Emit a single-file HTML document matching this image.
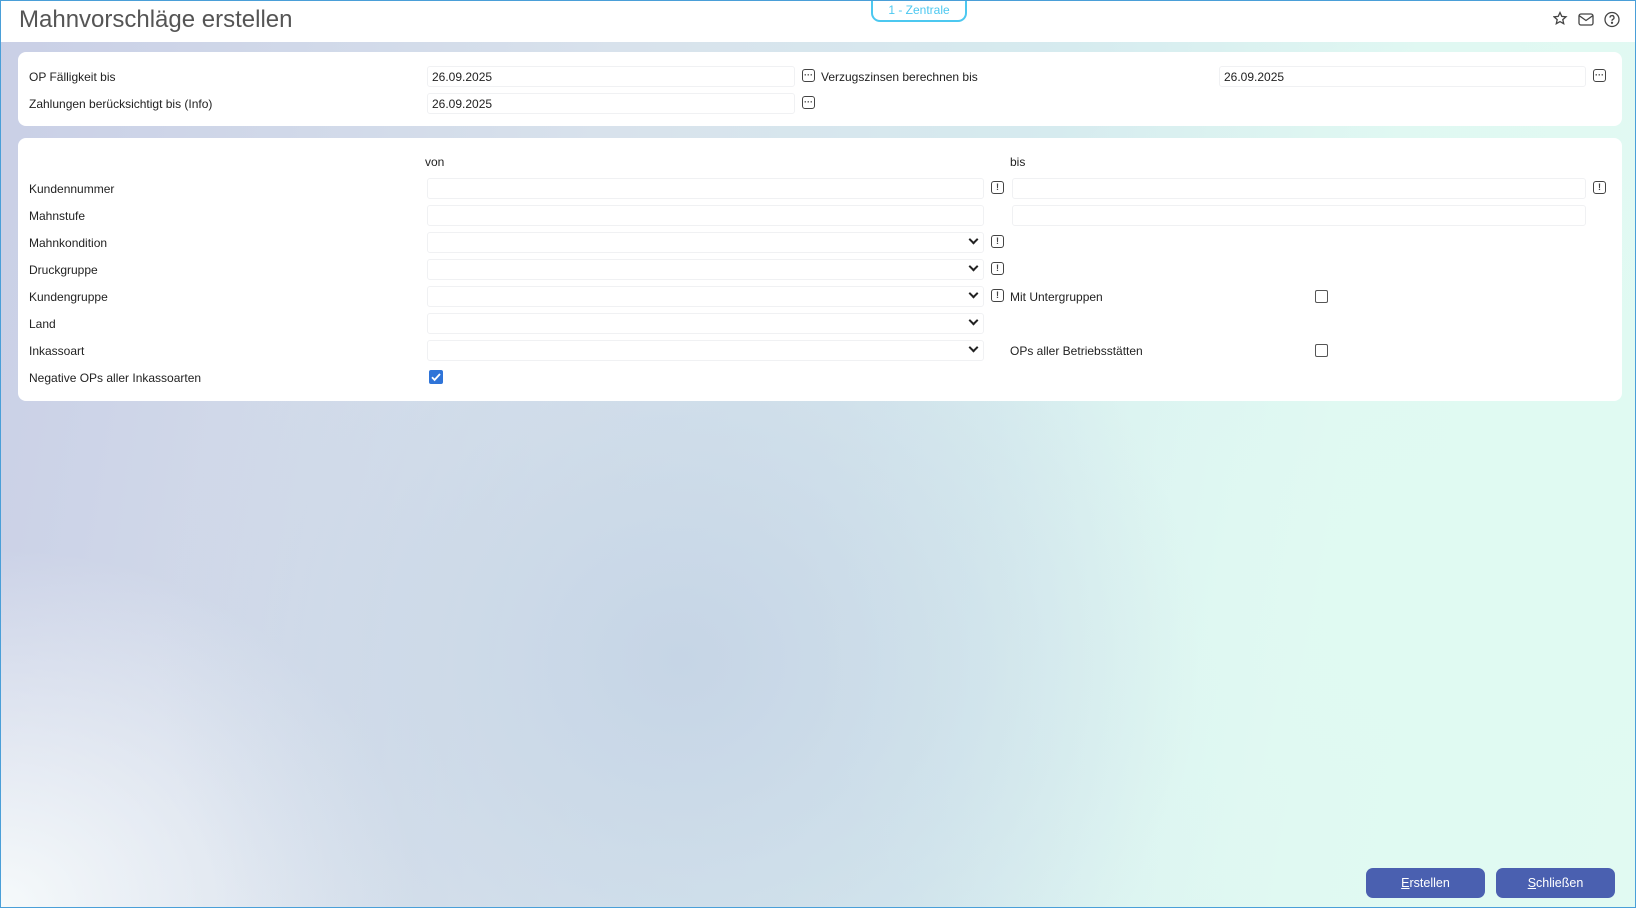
<!DOCTYPE html>
<html><head><meta charset="utf-8"><style>
*{box-sizing:border-box;margin:0;padding:0}
html,body{width:1636px;height:908px;overflow:hidden}
body{font-family:"Liberation Sans",sans-serif;font-size:12px;color:#222;position:relative;
background:
radial-gradient(ellipse 520px 480px at 680px 660px,#c6d5e6 0%,rgba(198,213,230,0) 100%),
radial-gradient(ellipse 700px 600px at 1500px 600px,#e0faf2 0%,rgba(224,250,242,0) 100%),
radial-gradient(ellipse 420px 360px at 0px 908px,#f6fafb 0%,rgba(246,250,251,0) 100%),
linear-gradient(100deg,#c9cfe6 0%,#d8e2ec 35%,#d6ebef 60%,#e0f8f2 80%,#e2faf3 100%);}
.frame{position:absolute;inset:0;border:1px solid #4a9fd8;pointer-events:none;z-index:9}
.hdr{position:absolute;left:0;top:0;width:1636px;height:42px;background:#fff}
.title{position:absolute;left:19px;top:6px;font-size:24px;color:#555}
.tab{position:absolute;left:871px;top:-3px;width:96px;height:25px;border:2.5px solid #4cc8f0;border-top:none;border-radius:0 0 9px 9px;color:#4cc8f0;text-align:center;font-size:12px;line-height:20px;padding-top:3px}
.panel{position:absolute;left:18px;width:1604px;background:#fff;border-radius:8px}
.lbl{position:absolute;font-size:12px;top:0}
.inp{position:absolute;height:21px;border:1px solid #f0f1f3;border-radius:3px;background:#fff;font-size:12px;padding-left:4px;line-height:20px}
.ic{position:absolute;width:13px;height:13px;border:1.3px solid #444;border-radius:3px;font-size:9px;text-align:center;line-height:10px;font-weight:bold;color:#444}
.chev{position:absolute;width:7px;height:7px;border-right:2px solid #222;border-bottom:2px solid #222;transform:rotate(45deg)}
.cb{position:absolute;width:13px;height:13px;border:1.3px solid #555;border-radius:2px;background:#fff}
.btn{position:absolute;top:868px;width:119px;height:30px;background:#4a60b0;border-radius:7px;color:#fff;text-align:center;line-height:30px;font-size:12.5px}
</style></head><body>
<div class="frame"></div>
<div class="hdr">
<div class="title">Mahnvorschläge erstellen</div>
<div class="tab">1 - Zentrale</div>
<svg style="position:absolute;left:1553px;top:10px" width="70" height="20" viewBox="0 0 70 20" fill="none" stroke="#444" stroke-width="1.3">
<path d="M7 2.5l1.8 3.9 4.2.4-3.2 2.8.9 4.1L7 11.6l-3.7 2.1.9-4.1L1 6.8l4.2-.4z"/>
<rect x="26" y="4" width="14" height="11" rx="2"/><path d="M26 5.5l7 5 7-5"/>
<circle cx="59" cy="9.5" r="7"/><path d="M57 7.6a2 2 0 1 1 2.6 1.9c-.6.3-.6.7-.6 1.4"/><circle cx="59" cy="12.8" r=".5" fill="#444"/>
</svg>
</div>

<div class="panel" style="top:52px;height:74px">
<div class="lbl" style="left:11px;top:18px">OP Fälligkeit bis</div>
<div class="inp" style="left:409px;top:14px;width:368px">26.09.2025</div>
<div class="ic" style="left:784px;top:17px">···</div>
<div class="lbl" style="left:803px;top:18px">Verzugszinsen berechnen bis</div>
<div class="inp" style="left:1201px;top:14px;width:367px">26.09.2025</div>
<div class="ic" style="left:1575px;top:17px">···</div>
<div class="lbl" style="left:11px;top:45px">Zahlungen berücksichtigt bis (Info)</div>
<div class="inp" style="left:409px;top:41px;width:368px">26.09.2025</div>
<div class="ic" style="left:784px;top:44px">···</div>
</div>

<div class="panel" style="top:138px;height:263px">
<div class="lbl" style="left:407px;top:17px">von</div>
<div class="lbl" style="left:992px;top:17px">bis</div>

<div class="lbl" style="left:11px;top:44px">Kundennummer</div>
<div class="inp" style="left:409px;top:40px;width:557px"></div>
<div class="ic" style="left:973px;top:43px">!</div>
<div class="inp" style="left:994px;top:40px;width:574px"></div>
<div class="ic" style="left:1575px;top:43px">!</div>

<div class="lbl" style="left:11px;top:71px">Mahnstufe</div>
<div class="inp" style="left:409px;top:67px;width:557px"></div>
<div class="inp" style="left:994px;top:67px;width:574px"></div>

<div class="lbl" style="left:11px;top:98px">Mahnkondition</div>
<div class="inp" style="left:409px;top:94px;width:557px"></div><div class="chev" style="left:952px;top:98px"></div>
<div class="ic" style="left:973px;top:97px">!</div>

<div class="lbl" style="left:11px;top:125px">Druckgruppe</div>
<div class="inp" style="left:409px;top:121px;width:557px"></div><div class="chev" style="left:952px;top:125px"></div>
<div class="ic" style="left:973px;top:124px">!</div>

<div class="lbl" style="left:11px;top:152px">Kundengruppe</div>
<div class="inp" style="left:409px;top:148px;width:557px"></div><div class="chev" style="left:952px;top:152px"></div>
<div class="ic" style="left:973px;top:151px">!</div>
<div class="lbl" style="left:992px;top:152px">Mit Untergruppen</div>
<div class="cb" style="left:1297px;top:152px"></div>

<div class="lbl" style="left:11px;top:179px">Land</div>
<div class="inp" style="left:409px;top:175px;width:557px"></div><div class="chev" style="left:952px;top:179px"></div>

<div class="lbl" style="left:11px;top:206px">Inkassoart</div>
<div class="inp" style="left:409px;top:202px;width:557px"></div><div class="chev" style="left:952px;top:206px"></div>
<div class="lbl" style="left:992px;top:206px">OPs aller Betriebsstätten</div>
<div class="cb" style="left:1297px;top:206px"></div>

<div class="lbl" style="left:11px;top:233px">Negative OPs aller Inkassoarten</div>
<svg style="position:absolute;left:411px;top:232px" width="14" height="14" viewBox="0 0 14 14"><rect width="14" height="14" rx="2" fill="#2f74d8"/><path d="M3 7.3l2.6 2.6L11 4" stroke="#fff" stroke-width="1.8" fill="none"/></svg>
</div>

<div class="btn" style="left:1366px"><u>E</u>rstellen</div>
<div class="btn" style="left:1496px"><u>S</u>chließen</div>
</body></html>
